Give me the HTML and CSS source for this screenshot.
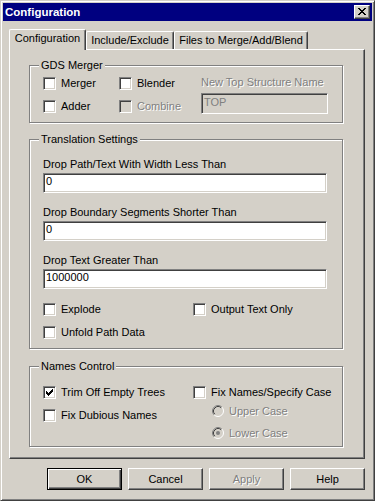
FILE: index.html
```html
<!DOCTYPE html>
<html lang="en">
<head>
    <meta charset="UTF-8">
    <meta name="viewport" content="width=device-width, initial-scale=1.0">
    <title>Configuration</title>
    <link rel="stylesheet" href="styles.css">
</head>
<body>
    <div class="window">
        <div class="titlebar">
            <span class="title">Configuration</span>
            <span class="close-btn">
                <svg width="8" height="7" viewBox="0 0 8 7" shape-rendering="crispEdges"><path d="M0 0h2v1H0zM6 0h2v1H6zM1 1h2v1H1zM5 1h2v1H5zM2 2h4v1H2zM3 3h2v1H3zM2 4h4v1H2zM1 5h2v1H1zM5 5h2v1H5zM0 6h2v1H0zM6 6h2v1H6z"/></svg>
            </span>
        </div>

        <div class="content">
            <div class="tabs">
                <div class="tab active" style="width: 77px">Configuration</div>
                <div class="tab" style="width: 88px">Include/Exclude</div>
                <div class="tab" style="width: 134px">Files to Merge/Add/Blend</div>
            </div>

            <div class="panel">
                <!-- GDS Merger -->
                <fieldset class="group gds">
                    <legend>GDS Merger</legend>
                    <div class="gds-grid">
                        <label class="opt"><span class="check"></span>Merger</label>
                        <label class="opt"><span class="check"></span>Blender</label>
                        <span class="caption disabled">New Top Structure Name</span>
                        <label class="opt low"><span class="check"></span>Adder</label>
                        <label class="opt low disabled"><span class="check off"></span>Combine</label>
                        <div class="edit readonly">TOP</div>
                    </div>
                </fieldset>

                <!-- Translation Settings -->
                <fieldset class="group translation">
                    <legend>Translation Settings</legend>
                    <div class="field">
                        <div class="field-label">Drop Path/Text With Width Less Than</div>
                        <div class="edit">0</div>
                    </div>
                    <div class="field">
                        <div class="field-label">Drop Boundary Segments Shorter Than</div>
                        <div class="edit">0</div>
                    </div>
                    <div class="field">
                        <div class="field-label">Drop Text Greater Than</div>
                        <div class="edit">1000000</div>
                    </div>
                    <div class="opt-grid">
                        <label class="opt"><span class="check"></span>Explode</label>
                        <label class="opt"><span class="check"></span>Output Text Only</label>
                        <label class="opt"><span class="check"></span>Unfold Path Data</label>
                    </div>
                </fieldset>

                <!-- Names Control -->
                <fieldset class="group names">
                    <legend>Names Control</legend>
                    <div class="names-cols">
                        <div class="names-col">
                            <label class="opt">
                                <span class="check">
                                    <svg width="7" height="7" viewBox="0 0 7 7" shape-rendering="crispEdges"><path d="M6 0h1v1H6zM5 1h2v1H5zM0 2h1v1H0zM4 2h3v1H4zM0 3h2v1H0zM3 3h3v1H3zM0 4h5v1H0zM1 5h3v1H1zM2 6h1v1H2z"/></svg>
                                </span>Trim Off Empty Trees
                            </label>
                            <label class="opt"><span class="check"></span>Fix Dubious Names</label>
                        </div>
                        <div class="names-col">
                            <label class="opt"><span class="check"></span>Fix Names/Specify Case</label>
                            <label class="opt radio-opt upper disabled">
                                <svg class="radio" width="12" height="12" viewBox="0 0 12 12">
                                    <circle cx="6" cy="6" r="5" fill="#d4d0c8"/>
                                    <path d="M2.11 9.89A5.5 5.5 0 0 1 9.89 2.11" stroke="#808080" fill="none"/>
                                    <path d="M9.89 2.11A5.5 5.5 0 0 1 2.11 9.89" stroke="#fff" fill="none"/>
                                    <path d="M2.82 9.18A4.5 4.5 0 0 1 9.18 2.82" stroke="#404040" fill="none"/>
                                </svg>Upper Case
                            </label>
                            <label class="opt radio-opt lower disabled">
                                <svg class="radio" width="12" height="12" viewBox="0 0 12 12">
                                    <circle cx="6" cy="6" r="5" fill="#d4d0c8"/>
                                    <path d="M2.11 9.89A5.5 5.5 0 0 1 9.89 2.11" stroke="#808080" fill="none"/>
                                    <path d="M9.89 2.11A5.5 5.5 0 0 1 2.11 9.89" stroke="#fff" fill="none"/>
                                    <path d="M2.82 9.18A4.5 4.5 0 0 1 9.18 2.82" stroke="#404040" fill="none"/>
                                    <circle cx="6" cy="6" r="2" fill="#808080"/>
                                </svg>Lower Case
                            </label>
                        </div>
                    </div>
                </fieldset>
            </div>

            <div class="buttons">
                <div class="btn default">OK</div>
                <div class="btn">Cancel</div>
                <div class="btn disabled">Apply</div>
                <div class="btn">Help</div>
            </div>
        </div>
    </div>
</body>
</html>
```

FILE: styles.css
```css
body {
    margin: 0;
    font-family: "Liberation Sans", Arial, sans-serif;
    font-size: 11px;
    line-height: 13px;
    color: #000;
    background: #d4d0c8;
}
.window {
    width: 375px;
    height: 501px;
    box-sizing: border-box;
    background: #d4d0c8;
    border: 1px solid;
    border-color: #d4d0c8 #404040 #404040 #d4d0c8;
    box-shadow: inset 1px 1px #fff, inset -1px -1px #808080;
    padding: 2px;
}
.titlebar {
    height: 18px;
    background: #000080;
    color: #fff;
    display: flex;
    align-items: center;
    justify-content: space-between;
    padding: 0 2px;
}
.title {
    font-weight: bold;
    font-size: 11.5px;
}
.close-btn {
    width: 16px;
    height: 14px;
    box-sizing: border-box;
    background: #d4d0c8;
    border: 1px solid;
    border-color: #fff #404040 #404040 #fff;
    box-shadow: inset -1px -1px #808080;
    display: flex;
    align-items: center;
    justify-content: center;
    padding: 0 1px 1px 0;
}
.close-btn svg {
    display: block;
}
.content {
    padding: 8px 7px 0 6px;
}

/* tabs */
.tabs {
    height: 20px;
    display: flex;
    align-items: flex-end;
}
.tab {
    height: 18px;
    box-sizing: border-box;
    padding-top: 2px;
    text-align: center;
    white-space: nowrap;
    border-left: 1px solid #fff;
    border-top: 1px solid #fff;
    border-right: 1px solid #404040;
    box-shadow: inset -1px 0 #808080;
    border-radius: 2px 2px 0 0;
    background: #d4d0c8;
}
.tab.active {
    height: 21px;
    margin-bottom: -1px;
    position: relative;
    z-index: 1;
}
.panel {
    height: 410px;
    box-sizing: border-box;
    border: 1px solid;
    border-color: #fff #404040 #404040 #fff;
    box-shadow: inset -1px -1px #808080;
    padding: 9px 21px 0 19px;
}

/* group boxes */
.group {
    margin: 0;
    min-width: 0;
    border: 1px solid #808080;
    box-shadow: inset 1px 1px #fff, 1px 1px #fff;
    padding: 5px 13px 8px;
}
.group legend {
    padding: 0 2px;
    margin-left: -4px;
    line-height: 13px;
    background: #d4d0c8;
}
.translation {
    margin-top: 10px;
    padding-top: 11px;
    padding-bottom: 9px;
}
.names {
    margin-top: 11px;
    padding-top: 13px;
    padding-bottom: 7px;
}

.gds-grid {
    display: grid;
    grid-template-columns: 76px 82px 1fr;
    grid-template-rows: 13px 21px;
    row-gap: 3px;
    align-items: center;
}
.caption {
    white-space: nowrap;
    margin-top: -2px;
}
.opt.low {
    align-self: end;
    margin-bottom: 1px;
}

.opt {
    display: flex;
    align-items: center;
    gap: 5px;
    height: 13px;
    white-space: nowrap;
}
.check {
    flex: none;
    width: 13px;
    height: 13px;
    box-sizing: border-box;
    border: 1px solid;
    border-color: #808080 #fff #fff #808080;
    box-shadow: inset 1px 1px #404040, inset -1px -1px #d4d0c8;
    background: #fff;
}
.check.off {
    background: #d4d0c8;
}
.check svg {
    display: block;
    margin: 2px 0 0 2px;
}
.radio {
    flex: none;
    display: block;
}
.disabled {
    color: #808080;
    text-shadow: 1px 1px 0 #fff;
}

.edit {
    height: 20px;
    box-sizing: border-box;
    border: 1px solid;
    border-color: #808080 #fff #fff #808080;
    box-shadow: inset 1px 1px #404040, inset -1px -1px #d4d0c8;
    background: #fff;
    padding: 1px 2px 0;
    line-height: 13px;
}
.edit.readonly {
    width: 127px;
    height: 21px;
    background: #d4d0c8;
    color: #808080;
    padding-top: 2px;
}
.field {
    width: 284px;
    margin-bottom: 12px;
}
.field:first-child {
    margin-bottom: 13px;
}
.field-label {
    line-height: 14px;
    margin-bottom: 2px;
}
.opt-grid {
    display: grid;
    grid-template-columns: 150px 1fr;
    row-gap: 10px;
    padding-top: 2px;
}

.names-cols {
    display: grid;
    grid-template-columns: 150px 1fr;
}
.names-col {
    display: flex;
    flex-direction: column;
    gap: 10px;
}
.radio-opt {
    margin-left: 19px;
    height: 12px;
}
.radio-opt.upper {
    margin-top: -4px;
}

/* dialog buttons */
.buttons {
    display: flex;
    justify-content: flex-end;
    gap: 6px;
    margin-top: 9px;
}
.btn {
    width: 75px;
    height: 22px;
    box-sizing: border-box;
    border: 1px solid;
    border-color: #fff #404040 #404040 #fff;
    box-shadow: inset -1px -1px #808080;
    display: flex;
    align-items: center;
    justify-content: center;
}
.btn.default {
    border-color: #000;
    box-shadow: inset 1px 1px #fff, inset -1px -1px #404040, inset -2px -2px #808080;
}
```
